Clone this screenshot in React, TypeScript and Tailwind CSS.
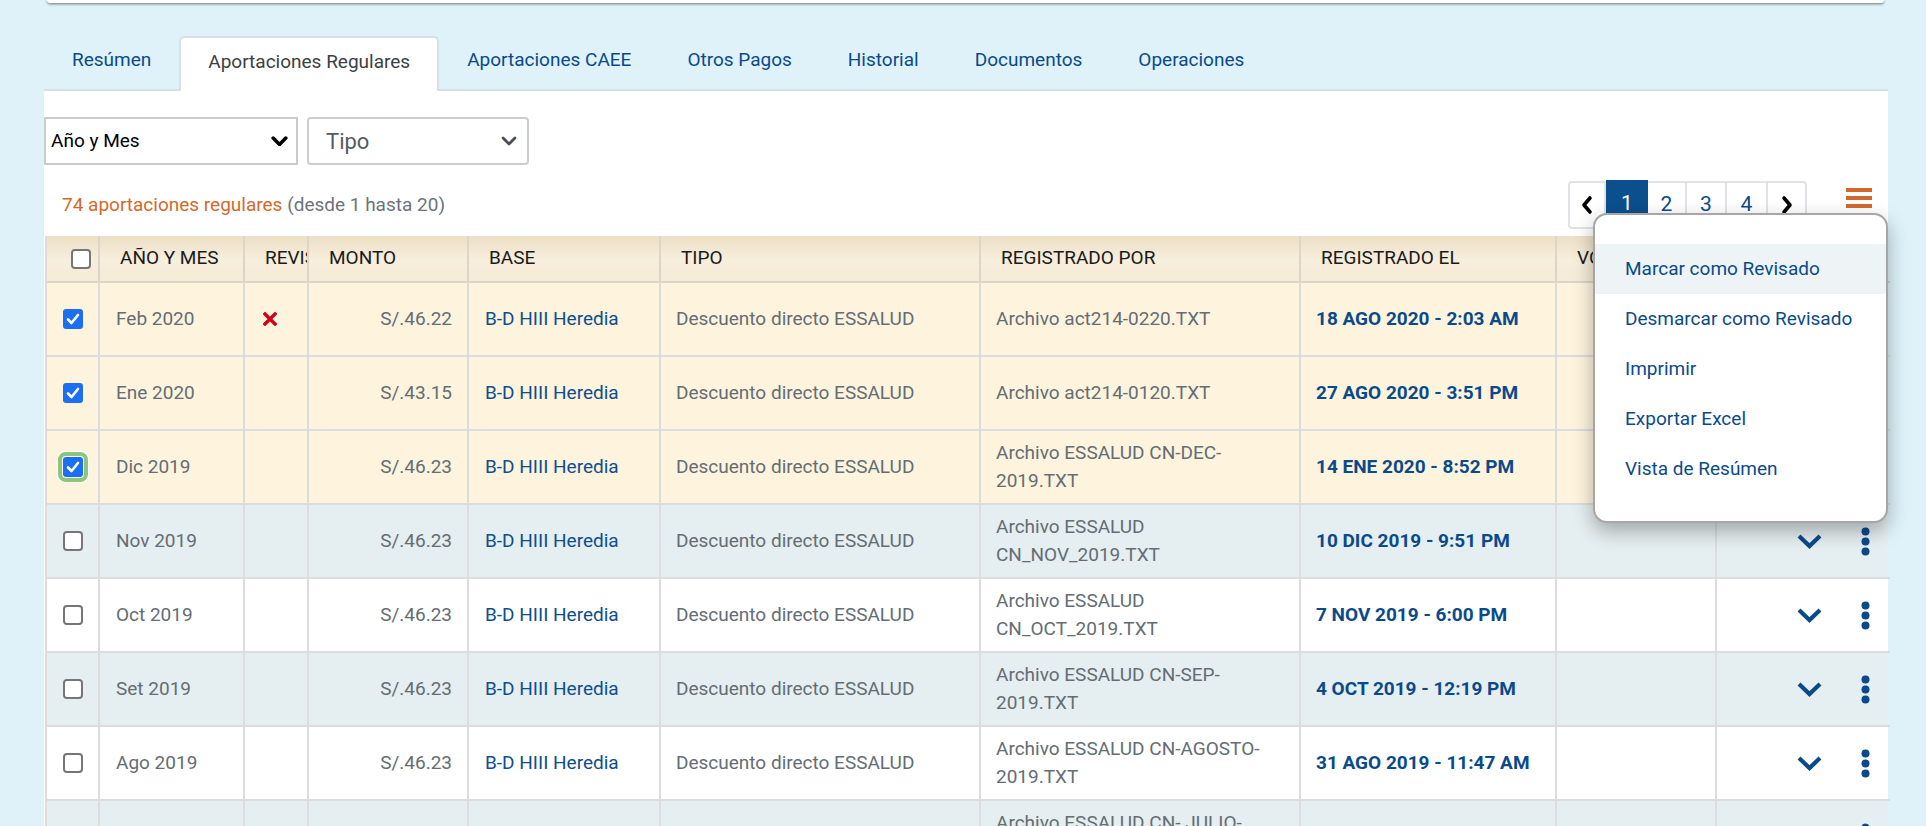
import React from "react";

const BLUE = "#0b4a8a";

type Row = {
  checked: boolean;
  focus?: boolean;
  ym: string;
  x?: boolean;
  monto: string;
  por: string[];
  el: string;
  bg: string;
};

const rows: Row[] = [
  { checked: true, ym: "Feb 2020", x: true, monto: "S/.46.22", por: ["Archivo act214-0220.TXT"], el: "18 AGO 2020 - 2:03 AM", bg: "bg-[#fef4de]" },
  { checked: true, ym: "Ene 2020", monto: "S/.43.15", por: ["Archivo act214-0120.TXT"], el: "27 AGO 2020 - 3:51 PM", bg: "bg-[#fef4de]" },
  { checked: true, focus: true, ym: "Dic 2019", monto: "S/.46.23", por: ["Archivo ESSALUD CN-DEC-", "2019.TXT"], el: "14 ENE 2020 - 8:52 PM", bg: "bg-[#fef4de]" },
  { checked: false, ym: "Nov 2019", monto: "S/.46.23", por: ["Archivo ESSALUD", "CN_NOV_2019.TXT"], el: "10 DIC 2019 - 9:51 PM", bg: "bg-[#e5eef0]" },
  { checked: false, ym: "Oct 2019", monto: "S/.46.23", por: ["Archivo ESSALUD", "CN_OCT_2019.TXT"], el: "7 NOV 2019 - 6:00 PM", bg: "bg-white" },
  { checked: false, ym: "Set 2019", monto: "S/.46.23", por: ["Archivo ESSALUD CN-SEP-", "2019.TXT"], el: "4 OCT 2019 - 12:19 PM", bg: "bg-[#e5eef0]" },
  { checked: false, ym: "Ago 2019", monto: "S/.46.23", por: ["Archivo ESSALUD CN-AGOSTO-", "2019.TXT"], el: "31 AGO 2019 - 11:47 AM", bg: "bg-white" },
  { checked: false, ym: "Jul 2019", monto: "S/.46.23", por: ["Archivo ESSALUD CN- JULIO-", "2019.TXT"], el: "8 AGO 2019 - 10:12 AM", bg: "bg-[#e5eef0]" },
];

const GRID = "grid grid-cols-[53px_145px_64px_160px_192px_320px_320px_256px_160px_173px]";

function Checkbox({ checked, focus }: { checked: boolean; focus?: boolean }) {
  if (checked) {
    return (
      <div className={`w-[20px] h-[20px] rounded-[3px] bg-[#1b6ff0] flex items-center justify-center ${focus ? "shadow-[0_0_0_1px_#ffffff,0_0_0_5px_#8cc67c,0_0_0_6px_#ffffff]" : ""}`}>
        <svg width="14" height="12" viewBox="0 0 14 12">
          <polyline points="2,6.5 5.5,10 12,2" fill="none" stroke="#fff" strokeWidth="2.6" strokeLinecap="round" strokeLinejoin="round" />
        </svg>
      </div>
    );
  }
  return <div className="w-[20px] h-[20px] rounded-[4px] border-2 border-[#767676] bg-white" />;
}

function Chevron({ color, w = 16, sw = 3 }: { color: string; w?: number; sw?: number }) {
  return (
    <svg width={w} height={w * 0.62} viewBox="0 0 16 10">
      <polyline points="2,2 8,8 14,2" fill="none" stroke={color} strokeWidth={sw} strokeLinecap="round" strokeLinejoin="round" />
    </svg>
  );
}

export default function App() {
  const tabs = ["Resúmen", "Aportaciones Regulares", "Aportaciones CAEE", "Otros Pagos", "Historial", "Documentos", "Operaciones"];
  const menu = ["Marcar como Revisado", "Desmarcar como Revisado", "Imprimir", "Exportar Excel", "Vista de Resúmen"];
  const headers = ["", "AÑO Y MES", "REVISADO", "MONTO", "BASE", "TIPO", "REGISTRADO POR", "REGISTRADO EL", "VOUCHER", ""];

  return (
    <div className="w-[1926px] h-[826px] overflow-hidden bg-[#dff2f9] font-[Roboto,sans-serif]">
      {/* top card remnant */}
      <div className="ml-[47px] mr-[42px] h-[3px] bg-white rounded-b-[6px] shadow-[0_1px_3px_rgba(0,0,0,0.55)]" />

      <div className="ml-[44px] mr-[38px]">
        {/* tabs */}
        <div className="mt-[33px] flex border-b-2 border-[#d6e1e6] h-[55px]">
          {tabs.map((t, i) => (
            <div
              key={t}
              className={`flex items-center pb-[4px] text-[19px] ${
                i === 1
                  ? "bg-white text-[#3b3f43] border-2 border-b-0 border-[#d6e1e6] rounded-t-[5px] -mb-[2px] px-[27px]"
                  : "px-[28px]"
              }`}
              style={i === 1 ? undefined : { color: BLUE }}
            >
              {t}
            </div>
          ))}
        </div>

        {/* panel */}
        <div className="relative bg-white pt-[26px]">
          {/* selects */}
          <div className="flex gap-[9px]">
            <div className="w-[254px] h-[48px] border-2 border-[#cbcbcb] flex items-center justify-between pl-[5px] pr-[8px] text-[19px] text-black">
              <span>Año y Mes</span>
              <Chevron color="#000" w={17} sw={3.4} />
            </div>
            <div className="w-[222px] h-[48px] border-2 border-[#cdcdcd] rounded-[4px] flex items-center justify-between pl-[17px] pr-[10px] text-[22px] text-[#555b60]">
              <span>Tipo</span>
              <Chevron color="#4a4f54" w={16} sw={2.8} />
            </div>
          </div>

          {/* count + pagination */}
          <div className="mt-[15px] h-[50px] flex items-center justify-between pl-[18px] pr-[16px]">
            <div className="text-[19px]">
              <span className="text-[#d2692b]">74 aportaciones regulares</span>{" "}
              <span className="text-[#6b747a]">(desde 1 hasta 20)</span>
            </div>
            <div className="flex items-center gap-[39px]">
              <div className="flex h-[48px] border-2 border-[#dfe3e8] rounded-[4px] text-[21px]" style={{ color: BLUE }}>
                <div className="w-[36px] flex items-center justify-center border-r-2 border-[#dfe3e8]">
                  <svg width="12" height="20" viewBox="0 0 12 20">
                    <polyline points="9,3 3,10 9,17" fill="none" stroke="#000" strokeWidth="3.6" strokeLinecap="round" strokeLinejoin="round" />
                  </svg>
                </div>
                <div className="w-[42px] -mt-[3px] flex items-center justify-center bg-[#0b4f8f] text-white">1</div>
                <div className="w-[39px] flex items-center justify-center border-r-2 border-[#dfe3e8]">2</div>
                <div className="w-[40px] flex items-center justify-center border-r-2 border-[#dfe3e8]">3</div>
                <div className="w-[41px] flex items-center justify-center border-r-2 border-[#dfe3e8]">4</div>
                <div className="w-[37px] flex items-center justify-center">
                  <svg width="12" height="20" viewBox="0 0 12 20">
                    <polyline points="3,3 9,10 3,17" fill="none" stroke="#000" strokeWidth="3.6" strokeLinecap="round" strokeLinejoin="round" />
                  </svg>
                </div>
              </div>
              <div className="flex flex-col gap-[4px] -mt-[14px]">
                <div className="w-[26px] h-[4px] bg-[#d2692b]" />
                <div className="w-[26px] h-[4px] bg-[#d2692b]" />
                <div className="w-[26px] h-[4px] bg-[#d2692b]" />
              </div>
            </div>
          </div>

          {/* table */}
          <div className="mt-[6px] ml-[1px] border-l-2 border-[#dcdcdc]">
            <div className={`${GRID} h-[47px] bg-linear-to-b from-[#ebdfc5] via-[#f7eedc] to-[#f5ebd6]`}>
              {headers.map((h, i) => (
                <div
                  key={i}
                  className={`flex items-center whitespace-nowrap overflow-hidden text-[19px] text-[#1a1a1a] border-b-2 ${i < 9 ? "border-r-2" : ""} border-[#dcd6c8] ${i === 0 ? "pl-[24px]" : "pl-[20px]"}`}
                >
                  {i === 0 ? <Checkbox checked={false} /> : h}
                </div>
              ))}
            </div>
            {rows.map((r, idx) => (
              <div key={idx} className={`${GRID} h-[74px] ${r.bg} text-[19px] leading-[28px]`}>
                <div className="flex items-center justify-center border-r-2 border-b-2 border-[#dcdcdc]">
                  <Checkbox checked={r.checked} focus={r.focus} />
                </div>
                <div className="flex items-center pl-[16px] text-[#646d73] border-r-2 border-b-2 border-[#dcdcdc]">{r.ym}</div>
                <div className="flex items-center pl-[18px] border-r-2 border-b-2 border-[#dcdcdc]">
                  {r.x && (
                    <svg width="14" height="14" viewBox="0 0 14 14">
                      <path d="M2 2 L12 12 M12 2 L2 12" stroke="#d0021b" strokeWidth="3.4" strokeLinecap="square" />
                    </svg>
                  )}
                </div>
                <div className="flex items-center justify-end pr-[15px] text-[#646d73] border-r-2 border-b-2 border-[#dcdcdc]">{r.monto}</div>
                <div className="flex items-center pl-[16px] text-[#0d4e8e] border-r-2 border-b-2 border-[#dcdcdc]">B-D HIII Heredia</div>
                <div className="flex items-center pl-[15px] text-[#646d73] border-r-2 border-b-2 border-[#dcdcdc]">Descuento directo ESSALUD</div>
                <div className="flex flex-col justify-center pl-[15px] text-[#646d73] border-r-2 border-b-2 border-[#dcdcdc]">
                  {r.por.map((p, j) => (
                    <span key={j}>{p}</span>
                  ))}
                </div>
                <div className="flex items-center pl-[15px] font-bold border-r-2 border-b-2 border-[#dcdcdc]" style={{ color: BLUE }}>
                  {r.el}
                </div>
                <div className="border-r-2 border-b-2 border-[#dcdcdc]" />
                <div className="flex items-center border-b-2 border-[#dcdcdc] pl-[79px]">
                  <svg width="27" height="16" viewBox="0 0 27 16">
                    <polyline points="3,3 13.5,13 24,3" fill="none" stroke={BLUE} strokeWidth="4.2" strokeLinejoin="miter" />
                  </svg>
                  <svg className="ml-[38px]" width="9" height="29" viewBox="0 0 9 29">
                    <circle cx="4.5" cy="4.5" r="4" fill={BLUE} />
                    <circle cx="4.5" cy="14.5" r="4" fill={BLUE} />
                    <circle cx="4.5" cy="24.5" r="4" fill={BLUE} />
                  </svg>
                </div>
              </div>
            ))}
          </div>

          {/* dropdown menu */}
          <div className="absolute right-0 top-[122px] w-[295px] h-[310px] bg-white border-2 border-[#a6a6a6] rounded-[14px] shadow-[0_8px_20px_rgba(0,0,0,0.3)] pt-[29px]">
            {menu.map((m, i) => (
              <div
                key={m}
                className={`h-[50px] flex items-center pl-[30px] text-[19px] ${i === 0 ? "bg-[#eef4f5]" : ""}`}
                style={{ color: BLUE }}
              >
                {m}
              </div>
            ))}
          </div>
        </div>
      </div>
    </div>
  );
}
